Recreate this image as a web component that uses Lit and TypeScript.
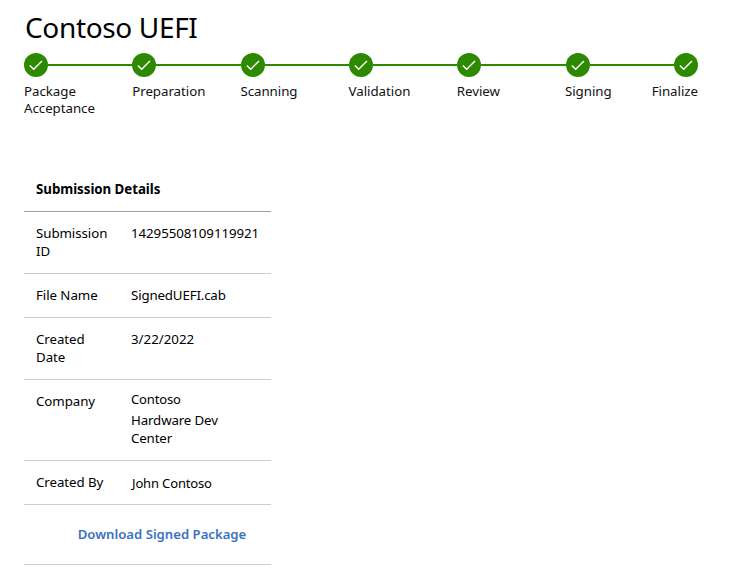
import { LitElement, html, svg, css } from 'lit';
import { customElement } from 'lit/decorators.js';

const STEPS = ['Package\nAcceptance', 'Preparation', 'Scanning', 'Validation', 'Review', 'Signing', 'Finalize'];

@customElement('step-tracker')
export class StepTracker extends LitElement {
  static styles = css`
    :host { display: block; width: 674px; }
    .track, .labels { display: flex; }
    .track { align-items: center; height: 24px; }
    .dot { flex: none; width: 24px; height: 24px; display: block; }
    .line { flex: 1; height: 2px; background: #2d8a00; }
    .labels { margin-top: 6px; }
    .label { flex: 0 0 108.2px; white-space: pre-line; line-height: 17px; letter-spacing: -0.04px; }
    .label:last-child { flex: 1 1 0; min-width: 0; display: flex; justify-content: flex-end; white-space: nowrap; }
  `;
  render() {
    const check = svg`<circle cx="12" cy="12" r="12" fill="#2d8a00"/><path d="M5.8 12.4 L9.7 16.3 L18 8" fill="none" stroke="#fff" stroke-width="1.4"/>`;
    return html`
      <div class="track">
        ${STEPS.map((_, i) => html`${i ? html`<div class="line"></div>` : ''}<svg class="dot" viewBox="0 0 24 24">${check}</svg>`)}
      </div>
      <div class="labels">${STEPS.map(s => html`<div class="label">${s}</div>`)}</div>
    `;
  }
}

@customElement('submission-details')
export class SubmissionDetails extends LitElement {
  static styles = css`
    :host { display: block; width: 247px; line-height: 18px; }
    .head { padding: 10px 12px 13px; font-weight: 700; letter-spacing: -0.04px; border-bottom: 1px solid #a0a0a0; }
    .row { display: grid; grid-template-columns: 95px 1fr; padding: 12px 0 13px 12px; border-bottom: 1px solid #ccc; white-space: pre-line; letter-spacing: -0.07px; }
    .file { letter-spacing: -0.16px; }
    .date { letter-spacing: 0; }
    .name { font-size: 13px; letter-spacing: -0.15px; }
    .company { margin-top: -3px; height: 22px; line-height: 21px; }
    .unit { letter-spacing: -0.14px; }
    .created { padding: 1px 0 0 1px; height: 17px; }
    .foot { padding: 20px 0 21px; text-align: center; border-bottom: 1px solid #ccc; }
    .link { color: #3b72c0; font-weight: 600; font-size: 13.15px; text-decoration: none; margin-left: 29px; }
  `;
  render() {
    return html`
      <div class="head">Submission Details</div>
      <div class="row"><div>${'Submission\nID'}</div><div>14295508109119921</div></div>
      <div class="row"><div>File Name</div><div class="file">SignedUEFI.cab</div></div>
      <div class="row"><div>${'Created\nDate'}</div><div class="date">3/22/2022</div></div>
      <div class="row"><div>Company</div><div><div class="company name">Contoso</div><div class="unit">${'Hardware Dev\nCenter'}</div></div></div>
      <div class="row"><div>Created By</div><div class="name created">John Contoso</div></div>
      <div class="foot"><a class="link">Download Signed Package</a></div>
    `;
  }
}

@customElement('app-root')
export class AppRoot extends LitElement {
  static styles = css`
    :host { display: block; box-sizing: border-box; height: 572px; padding: 7px 24px 0; background: #fff; color: #111;
      font: 13.3px/18px "Noto Sans", "Open Sans", sans-serif; overflow: hidden; }
    h1 { margin: 0 0 6px 1px; color: #000; font-size: 28px; line-height: 40px; font-weight: 400; letter-spacing: -0.35px; }
    .details { margin-top: 53px; color: #000; }
  `;
  render() {
    return html`
      <h1>Contoso UEFI</h1>
      <step-tracker></step-tracker>
      <submission-details class="details"></submission-details>
    `;
  }
}
